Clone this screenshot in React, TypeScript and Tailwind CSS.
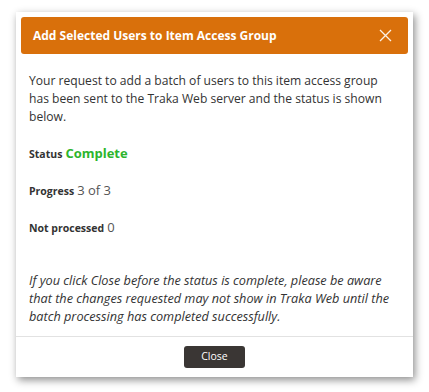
import React from 'react';

const font = { fontFamily: '"Open Sans", "Liberation Sans", sans-serif' };

const App: React.FC = () => {
  return (
    <div className="w-[429px] h-[392px] bg-white pt-[12px] pl-[16px] font-['Open_Sans',sans-serif]" style={font}>
      <div className="w-[397px] h-[365px] bg-white shadow-[2px_3px_8px_rgba(0,0,0,0.45)] flex flex-col">
        {/* Header */}
        <div className="mx-[5px] mt-[5px] h-[37px] rounded-[3px] bg-[#d9700b] flex items-center justify-between pl-[12px] pr-[16px]">
          <span className="text-white font-bold text-[12px]">Add Selected Users to Item Access Group</span>
          <svg width="13" height="13" viewBox="0 0 13 13" className="text-white/90">
            <path d="M1 1 L12 12 M12 1 L1 12" stroke="currentColor" strokeWidth="1.3" />
          </svg>
        </div>

        {/* Body */}
        <div className="pl-[13px] pr-[19px] text-[#333] text-[12.1px] leading-[18px]">
          <p className="mt-[18px]">
            Your request to add a batch of users to this item access group has been sent to the Traka Web server and the status is shown below.
          </p>
          <div className="mt-[18px] flex items-baseline gap-[3px]">
            <span className="font-bold text-[10.5px]">Status</span>
            <span className="font-bold text-[13px] text-[#2db52d]">Complete</span>
          </div>
          <div className="mt-[18px] flex items-baseline gap-[3px]">
            <span className="font-bold text-[10.5px]">Progress</span>
            <span className="text-[13px] text-[#555]">3 of 3</span>
          </div>
          <div className="mt-[18px] flex items-baseline gap-[3px]">
            <span className="font-bold text-[10.5px]">Not processed</span>
            <span className="text-[13px] text-[#555]">0</span>
          </div>
          <p className="mt-[34px] italic text-[12.7px]">
            If you click Close before the status is complete, please be aware that the changes requested may not show in Traka Web until the batch processing has completed successfully.
          </p>
        </div>

        {/* Footer */}
        <div className="mt-[11px] border-t border-[#e2e2e2] flex justify-center pt-[9px]">
          <button className="w-[61px] h-[22px] rounded-[3px] bg-[#3a3634] text-white text-[10.5px]">Close</button>
        </div>
      </div>
    </div>
  );
};

export default App;
